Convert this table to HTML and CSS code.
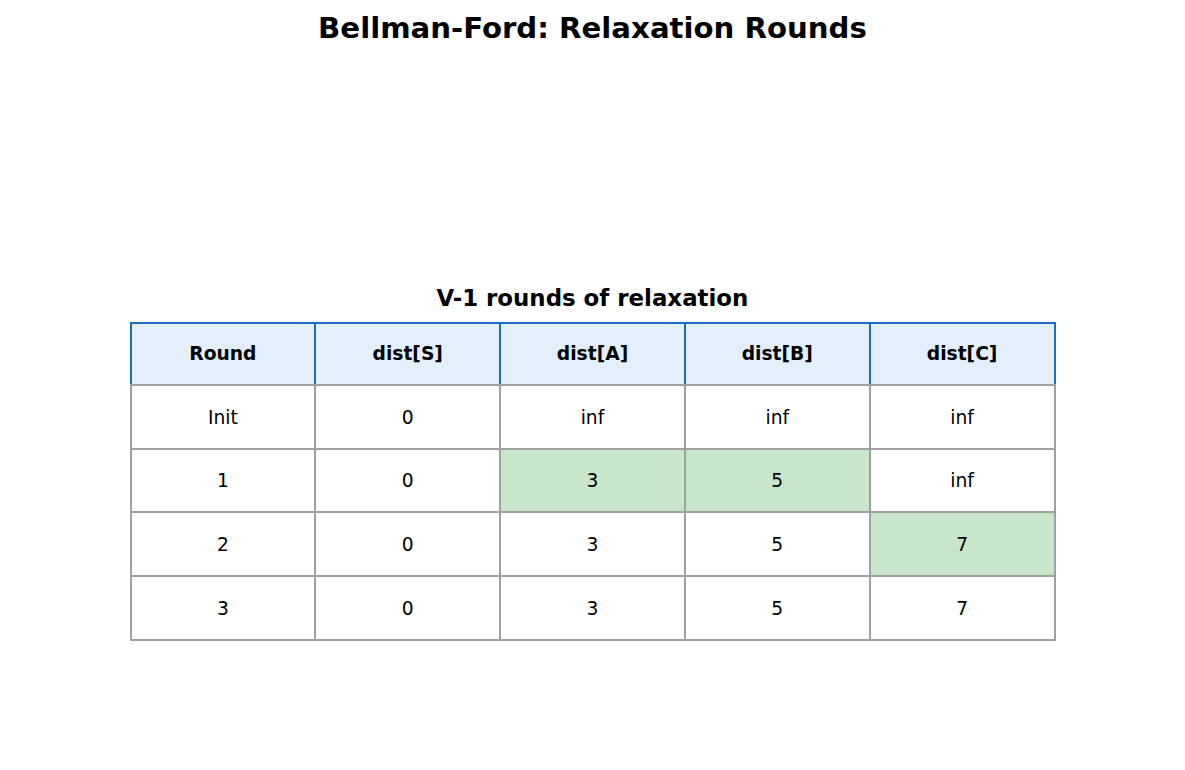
FILE: index.html
```html
<!DOCTYPE html>
<html>
<head>
<meta charset="utf-8">
<link rel="stylesheet" href="styles.css">
</head>
<body>
<div class="page">
  <h1 class="title">Bellman-Ford: Relaxation Rounds</h1>
  <h2 class="subtitle">V-1 rounds of relaxation</h2>
  <table class="grid">
    <thead>
      <tr class="r0"><th>Round</th><th>dist[S]</th><th>dist[A]</th><th>dist[B]</th><th>dist[C]</th></tr>
    </thead>
    <tbody>
      <tr class="r1"><td>Init</td><td>0</td><td>inf</td><td>inf</td><td>inf</td></tr>
      <tr class="r2"><td>1</td><td>0</td><td class="hl">3</td><td class="hl">5</td><td>inf</td></tr>
      <tr class="r3"><td>2</td><td>0</td><td>3</td><td>5</td><td class="hl">7</td></tr>
      <tr class="r4"><td>3</td><td>0</td><td>3</td><td>5</td><td>7</td></tr>
    </tbody>
  </table>
</div>
</body>
</html>
```
FILE: styles.css
```css
html, body {
  margin: 0;
  padding: 0;
  background: #ffffff;
}
.page {
  width: 1185px;
  height: 770px;
  font-family: "DejaVu Sans", "Liberation Sans", sans-serif;
  color: #000;
}
.title {
  margin: 0;
  padding-top: 12px;
  font-size: 29.2px;
  line-height: 33px;
  font-weight: bold;
  text-align: center;
}
.subtitle {
  margin: 237px 0 0 0;
  font-size: 22.9px;
  line-height: 32px;
  font-weight: bold;
  text-align: center;
}
.grid {
  margin: 8px auto 0 auto;
  width: 926px;
  border-collapse: collapse;
  table-layout: fixed;
  font-size: 18.7px;
}
.grid th, .grid td {
  padding: 0;
  text-align: center;
  vertical-align: middle;
  border: 2px solid #a0a0a0;
  background: #fff;
}
.grid th {
  padding-bottom: 2px;
  background: #e3f0fc;
  border-color: #1f6ac2;
  border-bottom-color: #a0a0a0;
  font-weight: bold;
}
.grid td.hl {
  background: #c8e6c9;
}
.r0 { height: 62px; }
.r1 { height: 64px; }
.r2 { height: 63px; }
.r3 { height: 64px; }
.r4 { height: 64px; }
```
